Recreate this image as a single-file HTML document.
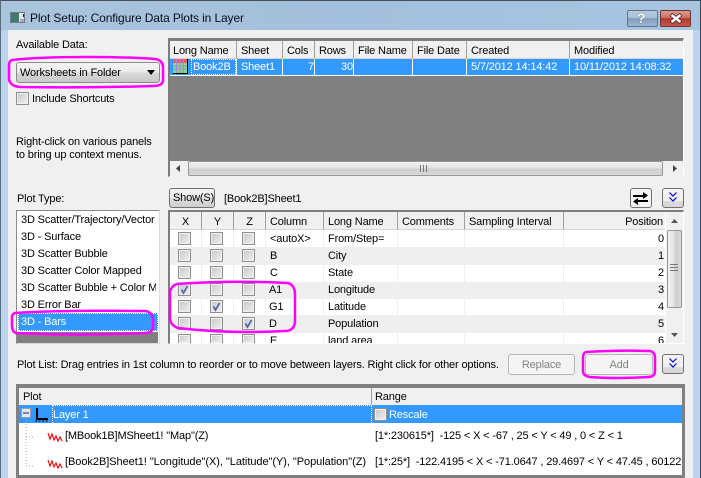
<!DOCTYPE html>
<html><head><meta charset="utf-8"><style>
html,body{margin:0;padding:0;width:701px;height:478px;overflow:hidden;background:#bcd5ec}
#w{position:relative;width:701px;height:478px;overflow:hidden;font:11px/16px "Liberation Sans",sans-serif;letter-spacing:-.15px;color:#000}
#w div,#w span.t{position:absolute;white-space:nowrap;box-sizing:border-box}
.t{position:absolute;white-space:nowrap}
.hc{background:#f0f0f0;border-right:1px solid #a0a0a0;border-bottom:1px solid #d5d5d5;height:18px;padding:2px 0 0 4px}
.cb{width:13px;height:13px;border:1px solid #8e8f8f;background:linear-gradient(135deg,#c8c8c8,#f0f0f0);box-shadow:inset 0 0 0 1px #f0f0f0}
</style></head><body><div id="w">
<div style="left:0;top:0;width:701px;height:478px;background:#bcd5ec"></div>
<div style="left:0;top:0;width:701px;height:30px;background:linear-gradient(90deg,#a9c4dd,#a3c0dc 50%,#a7c5e0);border-top:1px solid #45525e"></div>
<div style="left:0;top:0;width:1px;height:478px;background:#5d6b78"></div>
<div style="left:700px;top:0;width:1px;height:478px;background:#3e4a55"></div>
<div style="left:8px;top:30px;width:685px;height:448px;background:#f0f0f0"></div>

<svg style="position:absolute;left:10px;top:12px" width="16" height="12"><rect x=".5" y=".5" width="14" height="10" fill="#dfe6e8" stroke="#778"/><rect x="1" y="1" width="8" height="9" fill="#3d7a70"/><rect x="10" y="7" width="4" height="3" fill="#aab"/><rect x="13" y="2" width="1" height="3" fill="#222"/></svg>
<span class="t" style="left:30px;top:10px;font-size:12px;color:#0b0d1a;letter-spacing:-.12px">Plot Setup: Configure Data Plots in Layer</span>

<div style="left:627px;top:10px;width:31px;height:17px;border:1px solid #5f7488;border-radius:2px;background:linear-gradient(#b6cbe0,#a8c0d8 45%,#7f9dbc 50%,#9cb8d4)"></div>
<span class="t" style="left:637px;top:11px;font:bold 14px/15px 'Liberation Sans',sans-serif;color:#fff;text-shadow:0 0 1px #234">?</span>
<div style="left:660px;top:10px;width:31px;height:17px;border:1px solid #7a3030;border-radius:2px;background:linear-gradient(#d99a90,#cc6f64 45%,#b3362a 50%,#c8564a)"></div>
<svg style="position:absolute;left:669px;top:13px" width="14" height="11"><path d="M2 1.500L12 9.500M12 1.500L2 9.500" stroke="#4b2020" stroke-width="4"/><path d="M2.500 2L11.500 9M11.500 2L2.500 9" stroke="#fff" stroke-width="2.600"/></svg>

<span class="t" style="left:16px;top:37px">Available Data:</span>
<div style="left:16px;top:62px;width:144px;height:21px;border:1px solid #8a8a8a;border-radius:3px;background:linear-gradient(#f4f4f4,#ebebeb 48%,#d8d8d8 52%,#c8c8c8)"></div>
<span class="t" style="left:20px;top:65px">Worksheets in Folder</span>
<svg style="position:absolute;left:147px;top:70px" width="9" height="6"><path d="M0 0H8L4 5Z" fill="#000"/></svg>
<div class="cb" style="left:16px;top:92px"></div>
<span class="t" style="left:32px;top:91px">Include Shortcuts</span>
<span class="t" style="left:16px;top:134px">Right-click on various panels</span>
<span class="t" style="left:16px;top:147px">to bring up context menus.</span>

<!-- top grid -->
<div style="left:168px;top:38px;width:516px;height:139px;background:#808080;border-top:2px solid #7d7d7d;border-left:2px solid #7d7d7d;border-right:1px solid #fff;border-bottom:1px solid #fff"></div>
<div class="hc" style="left:170px;top:41px;width:67px;padding-left:3px">Long Name</div>
<div class="hc" style="left:237px;top:41px;width:46px">Sheet</div>
<div class="hc" style="left:283px;top:41px;width:32px">Cols</div>
<div class="hc" style="left:315px;top:41px;width:39px">Rows</div>
<div class="hc" style="left:354px;top:41px;width:59px">File Name</div>
<div class="hc" style="left:413px;top:41px;width:54px">File Date</div>
<div class="hc" style="left:467px;top:41px;width:103px">Created</div>
<div class="hc" style="left:570px;top:41px;width:113px;border-right:0">Modified</div>
<div style="left:170px;top:59px;width:513px;height:17px;background:#3399ff;border-bottom:1px solid #fff"></div>
<div style="left:236px;top:59px;width:1px;height:16px;background:#fff"></div>
<div style="left:282px;top:59px;width:1px;height:16px;background:#fff"></div>
<div style="left:314px;top:59px;width:1px;height:16px;background:#fff"></div>
<div style="left:353px;top:59px;width:1px;height:16px;background:#fff"></div>
<div style="left:412px;top:59px;width:1px;height:16px;background:#fff"></div>
<div style="left:466px;top:59px;width:1px;height:16px;background:#fff"></div>
<div style="left:569px;top:59px;width:1px;height:16px;background:#fff"></div>
<svg style="position:absolute;left:173px;top:59px" width="16" height="16"><rect x="0" y="0" width="15" height="15" fill="#000"/><rect x="0" y="0" width="14" height="14" fill="#7ae07a"/><rect x="0" y="0" width="14" height="4" fill="#ee5577"/><path d="M0 7H14M0 10H14M3.500 0V14M7 0V14M10.500 0V14" stroke="#b080e0"/></svg>
<div style="left:191px;top:59px;width:45px;height:16px;border:1px dotted #fff"></div>
<span class="t" style="left:193px;top:59px;color:#fff">Book2B</span>
<span class="t" style="left:241px;top:59px;color:#fff">Sheet1</span>
<span class="t" style="left:308px;top:59px;color:#fff">7</span>
<span class="t" style="left:341px;top:59px;color:#fff">30</span>
<span class="t" style="left:471px;top:59px;color:#fff">5/7/2012 14:14:42</span>
<span class="t" style="left:574px;top:59px;color:#fff">10/11/2012 14:08:32</span>
<div style="left:170px;top:161px;width:513px;height:16px;background:#f0f0f0"></div>
<div style="left:188px;top:161px;width:475px;height:15px;border:1px solid #979797;border-radius:2px;background:linear-gradient(#f2f2f2,#e4e4e4 45%,#cfcfcf 55%,#d8d8d8)"></div>
<svg style="position:absolute;left:176px;top:165px" width="6" height="8"><path d="M4 0V7L0 3.500Z" fill="#444"/></svg>
<svg style="position:absolute;left:673px;top:165px" width="6" height="8"><path d="M0 0V7L4 3.500Z" fill="#444"/></svg>
<svg style="position:absolute;left:420px;top:165px" width="9" height="8"><path d="M.5 0V7M3.500 0V7M6.500 0V7" stroke="#777"/></svg>

<!-- plot type -->
<span class="t" style="left:17px;top:191px">Plot Type:</span>
<div style="left:16px;top:210px;width:144px;height:134px;background:#fff;border:1px solid #8a8a8a;border-right-color:#ddd;border-bottom-color:#ddd"></div>
<span class="t" style="left:21px;top:212px;width:137px;overflow:hidden">3D Scatter/Trajectory/Vector</span>
<span class="t" style="left:21px;top:229px">3D - Surface</span>
<span class="t" style="left:21px;top:246px">3D Scatter Bubble</span>
<span class="t" style="left:21px;top:263px">3D Scatter Color Mapped</span>
<span class="t" style="left:21px;top:280px;width:135px;overflow:hidden">3D Scatter Bubble + Color Mapped</span>
<span class="t" style="left:21px;top:297px">3D Error Bar</span>
<div style="left:18px;top:313px;width:140px;height:18px;background:#3399ff;border:1px dotted #fff"></div>
<span class="t" style="left:21px;top:314px;color:#fff">3D - Bars</span>
<div style="left:17px;top:332px;width:141px;height:11px;background:#808080"></div>

<!-- show row -->
<div style="left:169px;top:188px;width:46px;height:20px;border:1px solid #707070;border-radius:3px;background:linear-gradient(#f2f2f2,#ebebeb 48%,#dcdcdc 52%,#cfcfcf);padding:1px 0 0 3px">Show(S)</div>
<span class="t" style="left:224px;top:191px">[Book2B]Sheet1</span>
<div style="left:630px;top:188px;width:22px;height:20px;border:1px solid #707070;border-radius:3px;background:#f4f4f4"></div>
<svg style="position:absolute;left:633px;top:191px" width="16" height="15"><path d="M0 4H10V1L15 4.500L10 8V6H0ZM15 9H5V7L0 10.500L5 14V11H15Z" fill="#000"/></svg>
<div style="left:662px;top:188px;width:22px;height:20px;border:1px solid #707070;border-radius:3px;background:linear-gradient(#f4f4f4,#f0f0f0 65%,#d8d8d8 70%)"></div>
<svg style="position:absolute;left:669px;top:192px" width="8" height="11"><path d="M.5 .5L4 4L7.500 .5M.5 5.500L4 9L7.500 5.500" fill="none" stroke="#0000e0" stroke-width="1.200"/></svg>

<!-- column grid -->
<div style="left:168px;top:210px;width:516px;height:134px;background:#fff;border-top:2px solid #7d7d7d;border-left:2px solid #7d7d7d;border-right:1px solid #fff;border-bottom:1px solid #fff"></div>
<div class="hc" style="left:170px;top:212px;width:32px;text-align:center;padding-left:0">X</div>
<div class="hc" style="left:202px;top:212px;width:32px;text-align:center;padding-left:0">Y</div>
<div class="hc" style="left:234px;top:212px;width:32px;text-align:center;padding-left:0">Z</div>
<div class="hc" style="left:266px;top:212px;width:58px">Column</div>
<div class="hc" style="left:324px;top:212px;width:74px">Long Name</div>
<div class="hc" style="left:398px;top:212px;width:67px">Comments</div>
<div class="hc" style="left:465px;top:212px;width:99px">Sampling Interval</div>
<div class="hc" style="left:564px;top:212px;width:101px;text-align:right;padding-right:2px;border-right:0">Position</div>
<div style="left:170px;top:247px;width:495px;height:18px;background:#efefef"></div>
<div style="left:170px;top:282px;width:495px;height:17px;background:#efefef"></div>
<div style="left:170px;top:315px;width:495px;height:18px;background:#efefef"></div>
<div style="left:201px;top:230px;width:1px;height:113px;background:#efefef"></div>
<div style="left:233px;top:230px;width:1px;height:113px;background:#efefef"></div>
<div style="left:265px;top:230px;width:1px;height:113px;background:#efefef"></div>
<div style="left:323px;top:230px;width:1px;height:113px;background:#efefef"></div>
<div style="left:397px;top:230px;width:1px;height:113px;background:#efefef"></div>
<div style="left:464px;top:230px;width:1px;height:113px;background:#efefef"></div>
<div style="left:563px;top:230px;width:1px;height:113px;background:#efefef"></div>

<div class="cb" style="left:178px;top:232px"></div><div class="cb" style="left:210px;top:232px"></div><div class="cb" style="left:242px;top:232px"></div>
<div class="cb" style="left:178px;top:249px"></div><div class="cb" style="left:210px;top:249px"></div><div class="cb" style="left:242px;top:249px"></div>
<div class="cb" style="left:178px;top:266px"></div><div class="cb" style="left:210px;top:266px"></div><div class="cb" style="left:242px;top:266px"></div>
<div class="cb" style="left:178px;top:283px"></div><div class="cb" style="left:210px;top:283px"></div><div class="cb" style="left:242px;top:283px"></div>
<div class="cb" style="left:178px;top:300px"></div><div class="cb" style="left:210px;top:300px"></div><div class="cb" style="left:242px;top:300px"></div>
<div class="cb" style="left:178px;top:317px"></div><div class="cb" style="left:210px;top:317px"></div><div class="cb" style="left:242px;top:317px"></div>
<div class="cb" style="left:178px;top:334px;height:9px;border-bottom:0"></div><div class="cb" style="left:210px;top:334px;height:9px;border-bottom:0"></div><div class="cb" style="left:242px;top:334px;height:9px;border-bottom:0"></div>
<svg style="position:absolute;left:178px;top:283px" width="13" height="13"><path d="M3.500 6.500L5.500 10L9.500 3" fill="none" stroke="#4a62a8" stroke-width="1.700"/></svg>
<svg style="position:absolute;left:210px;top:300px" width="13" height="13"><path d="M3.500 6.500L5.500 10L9.500 3" fill="none" stroke="#4a62a8" stroke-width="1.700"/></svg>
<svg style="position:absolute;left:242px;top:317px" width="13" height="13"><path d="M3.500 6.500L5.500 10L9.500 3" fill="none" stroke="#4a62a8" stroke-width="1.700"/></svg>

<span class="t" style="left:270px;top:231px">&lt;autoX&gt;</span><span class="t" style="left:328px;top:231px">From/Step=</span><span class="t" style="left:658px;top:231px">0</span>
<span class="t" style="left:270px;top:248px">B</span><span class="t" style="left:328px;top:248px">City</span><span class="t" style="left:658px;top:248px">1</span>
<span class="t" style="left:270px;top:265px">C</span><span class="t" style="left:328px;top:265px">State</span><span class="t" style="left:658px;top:265px">2</span>
<span class="t" style="left:269px;top:282px">A1</span><span class="t" style="left:328px;top:282px">Longitude</span><span class="t" style="left:658px;top:282px">3</span>
<span class="t" style="left:269px;top:299px">G1</span><span class="t" style="left:328px;top:299px">Latitude</span><span class="t" style="left:658px;top:299px">4</span>
<span class="t" style="left:269px;top:316px">D</span><span class="t" style="left:328px;top:316px">Population</span><span class="t" style="left:658px;top:316px">5</span>
<div style="left:170px;top:333px;width:495px;height:10px;overflow:hidden">
<span class="t" style="left:100px;top:0">E</span><span class="t" style="left:158px;top:0">land area</span><span class="t" style="left:488px;top:0">6</span></div>

<div style="left:666px;top:212px;width:17px;height:131px;background:#f0f0f0"></div>
<div style="left:667px;top:230px;width:15px;height:78px;border:1px solid #979797;border-radius:2px;background:linear-gradient(90deg,#f2f2f2,#e4e4e4 45%,#cfcfcf 55%,#d8d8d8)"></div>
<svg style="position:absolute;left:670px;top:264px" width="9" height="9"><path d="M0 .5H8M0 3.500H8M0 6.500H8" stroke="#777"/></svg>
<svg style="position:absolute;left:671px;top:219px" width="8" height="5"><path d="M0 4H7L3.500 0Z" fill="#555"/></svg>
<svg style="position:absolute;left:671px;top:333px" width="8" height="5"><path d="M0 0H7L3.500 4Z" fill="#555"/></svg>

<!-- plot list label -->
<span class="t" style="left:17px;top:357px">Plot List: Drag entries in 1st column to reorder or to move between layers. Right click for other options.</span>
<div style="left:508px;top:354px;width:67px;height:21px;border:1px solid #b5b5b5;border-radius:3px;background:#f4f4f4;color:#838383;text-align:center;padding-top:2px">Replace</div>
<div style="left:585px;top:354px;width:68px;height:21px;border:1px solid #b5b5b5;border-radius:3px;background:#f4f4f4;color:#838383;text-align:center;padding-top:2px">Add</div>
<div style="left:662px;top:354px;width:22px;height:20px;border:1px solid #707070;border-radius:3px;background:linear-gradient(#f4f4f4,#f0f0f0 65%,#d8d8d8 70%)"></div>
<svg style="position:absolute;left:669px;top:358px" width="8" height="11"><path d="M.5 .5L4 4L7.500 .5M.5 5.500L4 9L7.500 5.500" fill="none" stroke="#0000e0" stroke-width="1.200"/></svg>

<!-- bottom list -->
<div style="left:16px;top:384px;width:669px;height:94px;background:#808080"></div>
<div style="left:19px;top:388px;width:663px;height:87px;background:#fff"></div>
<div class="hc" style="left:19px;top:388px;width:353px;height:17px;border-bottom:0;padding:1px 0 0 4px">Plot</div>
<div class="hc" style="left:372px;top:388px;width:310px;height:17px;border:0;padding:1px 0 0 3px">Range</div>
<div style="left:19px;top:405px;width:663px;height:18px;background:#3399ff"></div>
<div style="left:52px;top:405px;width:320px;height:18px;border-top:1px dotted #fff;border-left:1px dotted #fff"></div>
<div style="left:371px;top:405px;width:1px;height:18px;border-left:1px dotted #fff"></div>
<svg style="position:absolute;left:21px;top:408px" width="50" height="66"><rect x=".5" y=".5" width="9" height="9" fill="#e8e8e8" stroke="#99a"/><path d="M2 5H8" stroke="#23459c" stroke-width="1.200"/><path d="M5 10V58M5 29H14M5 58H14" stroke="#aaa" stroke-dasharray="1 2"/><path d="M16 0V11H27" fill="none" stroke="#000" stroke-width="2"/><path d="M14 13H27" stroke="#000" stroke-dasharray="2 1.500"/></svg>
<span class="t" style="left:53px;top:407px;color:#fff">Layer 1</span>
<div class="cb" style="left:374px;top:408px"></div>
<span class="t" style="left:389px;top:407px;color:#fff">Rescale</span>
<svg style="position:absolute;left:47px;top:432px" width="16" height="38"><path d="M1 1L3 7L5 2L7 8L9 4L11 9L13 5L15 9" fill="none" stroke="#f00000" stroke-width="1.100"/><path d="M1 28L3 34L5 29L7 35L9 31L11 36L13 32L15 36" fill="none" stroke="#f00000" stroke-width="1.100"/></svg>
<span class="t" style="left:65px;top:428px">[MBook1B]MSheet1! "Map"(Z)</span>
<span class="t" style="left:65px;top:454px;letter-spacing:-.05px">[Book2B]Sheet1! "Longitude"(X), "Latitude"(Y), "Population"(Z)</span>
<span class="t" style="left:375px;top:428px">[1*:230615*]&nbsp; -125 &lt; X &lt; -67 , 25 &lt; Y &lt; 49 , 0 &lt; Z &lt; 1</span>
<span class="t" style="left:375px;top:454px;width:307px;overflow:hidden">[1*:25*]&nbsp; -122.4195 &lt; X &lt; -71.0647 , 29.4697 &lt; Y &lt; 47.45 , 60122 &lt; Z</span>

<!-- magenta highlights -->
<svg style="position:absolute;left:0;top:0" width="701" height="478" fill="none" stroke="#ff00ff" stroke-width="2.500">
<path d="M12 60Q40 57 85 57T155 59Q163 60 163 68V80Q163 86 153 86Q90 88 20 87Q9 86 9 78V66Q9 61 12 60Z"/>
<path d="M15 313Q60 310 145 311Q153 312 153 320V328Q152 333 145 333Q80 336 16 333Q12 332 12 325V317Q12 314 15 313Z"/>
<path d="M177 284Q230 280 288 283Q295 285 295 295V322Q294 331 285 331Q230 334 178 328Q170 325 170 318V292Q171 286 177 284Z"/>
<path d="M586 352Q620 350 650 351Q655 352 655 358V371Q655 377 648 377Q615 379 590 377Q583 376 583 371V358Q583 353 586 352Z"/>
</svg>
</div></body></html>
